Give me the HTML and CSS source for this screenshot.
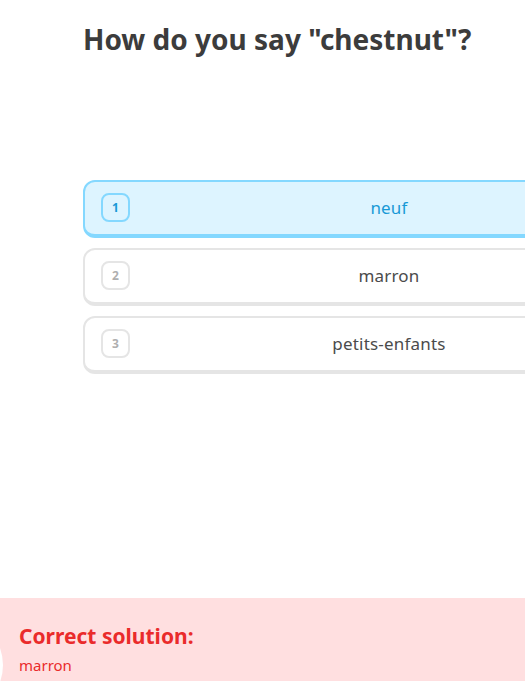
FILE: index.html
```html
<!DOCTYPE html>
<html lang="en">
<head>
<meta charset="utf-8">
<title>Challenge</title>
<link rel="stylesheet" href="styles.css">
</head>
<body>
<div class="page">
  <main class="challenge">
    <h1 class="prompt">How do you say "chestnut"?</h1>
    <div class="choices">
      <div class="choice selected">
        <span class="key">1</span>
        <span class="label">neuf</span>
        <span class="spacer"></span>
      </div>
      <div class="choice">
        <span class="key">2</span>
        <span class="label">marron</span>
        <span class="spacer"></span>
      </div>
      <div class="choice">
        <span class="key">3</span>
        <span class="label">petits-enfants</span>
        <span class="spacer"></span>
      </div>
    </div>
  </main>
  <footer class="feedback">
    <span class="blob"></span>
    <h2 class="feedback-title">Correct solution:</h2>
    <p class="feedback-text">marron</p>
  </footer>
</div>
</body>
</html>
```
FILE: styles.css
```css
html, body {
  margin: 0;
  padding: 0;
  background: #ffffff;
  overflow: hidden;
}
body {
  width: 525px;
  height: 681px;
  font-family: "Noto Sans", "DejaVu Sans", sans-serif;
}
.page {
  width: 525px;
  height: 681px;
  display: flex;
  flex-direction: column;
  position: relative;
  overflow: hidden;
}
.challenge {
  flex: 1;
  padding: 20px 0 0 83px;
}
.prompt {
  margin: 0;
  font-size: 28px;
  line-height: 38px;
  font-weight: 700;
  color: #3c3c3c;
  white-space: nowrap;
}
.choices {
  margin-top: 122px;
  display: flex;
  flex-direction: column;
  gap: 10px;
  width: 612px;
}
.choice {
  box-sizing: border-box;
  height: 58px;
  display: flex;
  align-items: center;
  padding: 0 16px 2px 16px;
  border: 2px solid #e5e5e5;
  border-bottom-width: 4px;
  border-radius: 12px;
  background: #ffffff;
  color: #4b4b4b;
}
.choice.selected {
  background: #ddf4ff;
  border-color: #84d8ff;
  color: #1899d6;
}
.key {
  box-sizing: border-box;
  width: 29px;
  height: 29px;
  flex: none;
  display: flex;
  align-items: center;
  justify-content: center;
  border: 2px solid #e5e5e5;
  border-radius: 8px;
  font-size: 12px;
  font-weight: 700;
  color: #afafaf;
}
.selected .key {
  border-color: #84d8ff;
  color: #1899d6;
}
.label {
  flex: 1;
  text-align: center;
  font-size: 17px;
  letter-spacing: 0.2px;
}
.spacer {
  width: 29px;
  flex: none;
}
.feedback {
  height: 83px;
  box-sizing: border-box;
  background: #ffdfe0;
  padding: 24px 19px 0 19px;
  position: relative;
  color: #ea2b2b;
}
.blob {
  position: absolute;
  left: -97px;
  top: 17px;
  width: 100px;
  height: 100px;
  border-radius: 50%;
  background: #ffffff;
}
.feedback-title {
  margin: 0;
  font-size: 21px;
  line-height: 28px;
  font-weight: 700;
  position: relative;
}
.feedback-text {
  margin: 5px 0 0 0;
  font-size: 15px;
  line-height: 20px;
  position: relative;
}
```
